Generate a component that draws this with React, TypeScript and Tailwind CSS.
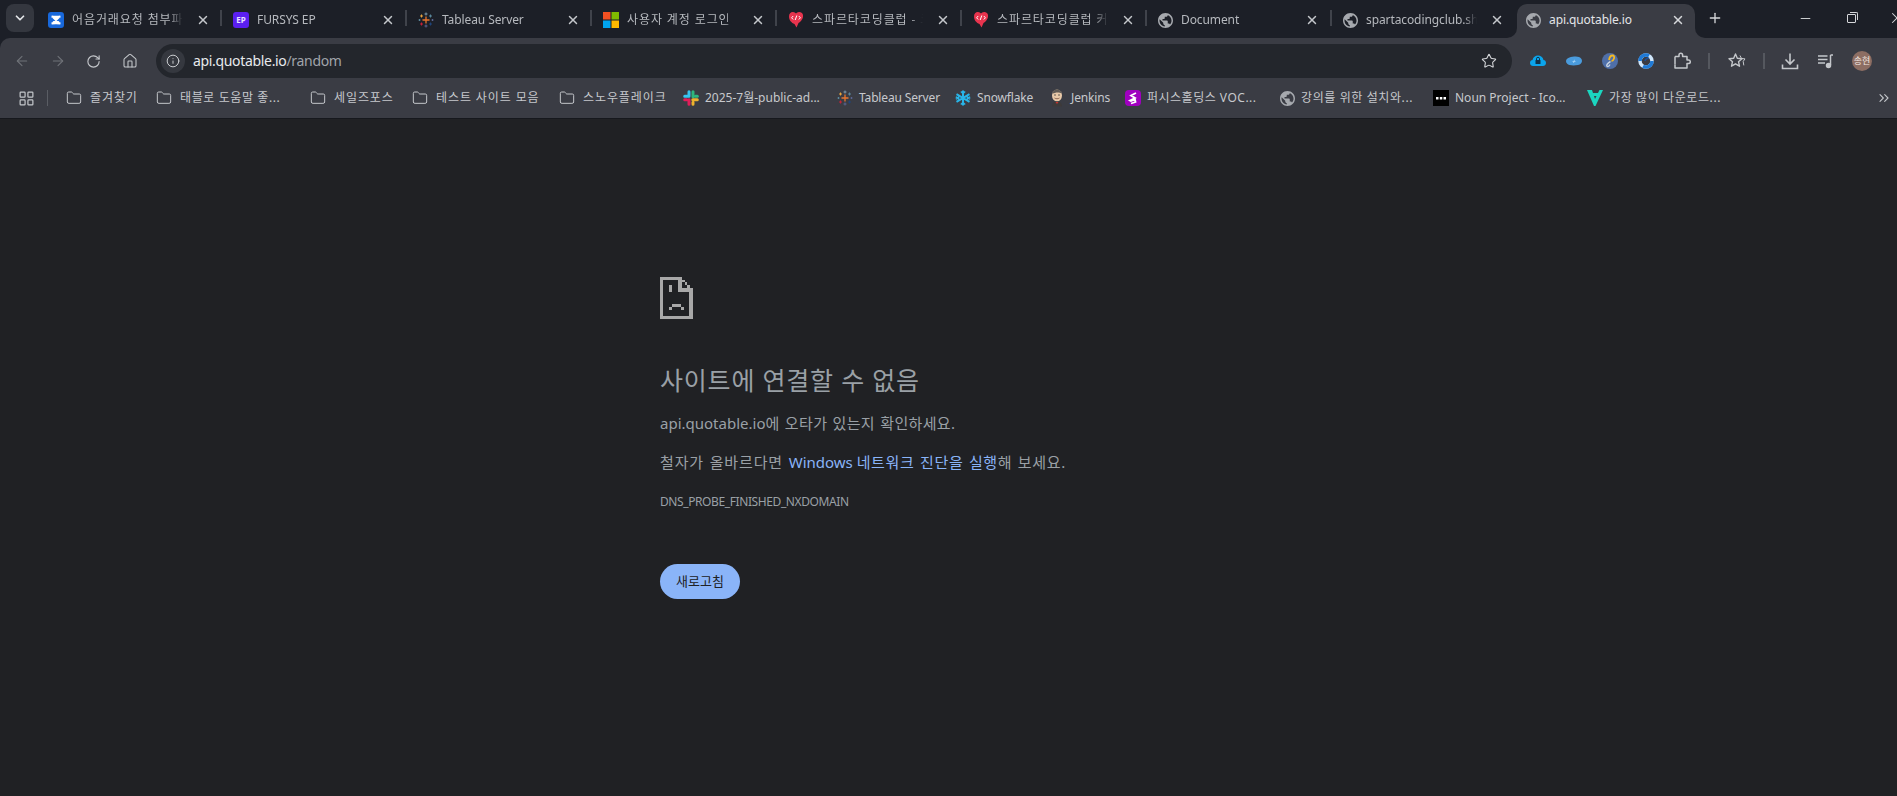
import {
  ArrowLeft,
  ArrowRight,
  ChevronDown,
  ChevronsRight,
  Folder,
  Home,
  Info,
  LayoutGrid,
  Minus,
  Plus,
  RotateCw,
  Star,
  X,
} from 'lucide-react';
import type { ReactNode } from 'react';

const Globe = ({ size = 15 }: { size?: number }) => (
  <svg width={size} height={size} viewBox="2 2 20 20" className="shrink-0">
    <path
      fill="#a6a9ae"
      d="M12 2C6.48 2 2 6.48 2 12s4.48 10 10 10 10-4.48 10-10S17.52 2 12 2zm-1 17.93c-3.95-.49-7-3.85-7-7.93 0-.62.08-1.21.21-1.79L9 15v1c0 1.1.9 2 2 2v1.93zm6.9-2.54c-.26-.81-1-1.39-1.9-1.39h-1v-3c0-.55-.45-1-1-1H8v-2h2c.55 0 1-.45 1-1V7h2c1.1 0 2-.9 2-2v-.41c2.93 1.19 5 4.06 5 7.41 0 2.08-.8 3.97-2.1 5.39z"
    />
  </svg>
);

const BlueX = () => (
  <svg width="16" height="16" viewBox="0 0 16 16" className="shrink-0">
    <rect width="16" height="16" rx="3" fill="#1868db" />
    <path d="M3.5 4.5c3 .6 6 .6 9 0M3.5 11.5c3-.6 6-.6 9 0M5 5l6 6M11 5l-6 6" stroke="#fff" strokeWidth="2.2" fill="none" />
  </svg>
);

const EpIcon = () => (
  <div className="flex h-4 w-4 shrink-0 items-center justify-center rounded-[3px] bg-[#5b1ff0] text-[8px] font-bold text-[#e8e0ff]">
    EP
  </div>
);

const TableauIcon = () => (
  <svg width="16" height="16" viewBox="0 0 16 16" className="shrink-0" fill="none" strokeWidth="1">
    <path d="M8 4.5v7M4.5 8h7" stroke="#e8762d" strokeWidth="1.3" />
    <path d="M8 .5v3M6.5 2h3" stroke="#7a99ac" />
    <path d="M8 12.5v3M6.5 14h3" stroke="#5b6591" />
    <path d="M3.5 2.5v3M2 4h3" stroke="#e8a33d" />
    <path d="M12.5 2.5v3M11 4h3" stroke="#59879b" />
    <path d="M3.5 10.5v3M2 12h3" stroke="#c72037" />
    <path d="M12.5 10.5v3M11 12h3" stroke="#1f447a" />
    <path d="M1.5 7v2M.5 8h2" stroke="#5b879b" />
    <path d="M14.5 7v2M13.5 8h2" stroke="#5b6591" />
  </svg>
);

const MsIcon = () => (
  <svg width="16" height="16" viewBox="0 0 16 16" className="shrink-0">
    <rect width="7.5" height="7.5" fill="#f25022" />
    <rect x="8.5" width="7.5" height="7.5" fill="#7fba00" />
    <rect y="8.5" width="7.5" height="7.5" fill="#00a4ef" />
    <rect x="8.5" y="8.5" width="7.5" height="7.5" fill="#ffb900" />
  </svg>
);

const SpartaIcon = () => (
  <svg width="16" height="18" viewBox="0 0 16 18" className="shrink-0">
    <path d="M1 5.500C1 2.500 3 .8 5 1c1.400.1 2.300.6 3 1.500C8.700 1.600 10 .8 11.500 1 14 1.200 15.500 3 15 6c-.4 2.600-2.500 4.800-4.500 6L8.500 16.500 6.500 13C3.500 12 1 9 1 5.500z" fill="#e8344e" />
    <path d="M5.200 5 3.600 6.800l1.600 1.700M10.800 5l1.600 1.800-1.600 1.700M8.800 4.500 7.200 9" stroke="#fff" strokeWidth="1" fill="none" />
  </svg>
);

const SlackIcon = () => (
  <svg width="16" height="16" viewBox="0 0 16 16" className="shrink-0" fill="none" strokeWidth="3" strokeLinecap="round">
    <path d="M6 1.700v4.600M1.700 6.200h3" stroke="#36c5f0" />
    <path d="M10 1.700v5" stroke="#2eb67d" />
    <path d="M14.300 6.200h-2" stroke="#2eb67d" />
    <path d="M10 14.300v-2M9.800 9.800h4.500" stroke="#ecb22e" />
    <path d="M6 14.300V9.800M1.700 9.800h2" stroke="#e01e5a" />
  </svg>
);

const SnowflakeIcon = () => (
  <svg width="16" height="16" viewBox="0 0 16 16" className="shrink-0" fill="none" stroke="#29b5e8" strokeWidth="2">
    <path d="M8 .5v15M1.500 4.200l13 7.600M14.500 4.200l-13 7.600" />
    <path d="M5.800 1.500 8 3.500l2.200-2M5.800 14.500 8 12.500l2.200 2M.8 7l2.800.9.600-2.900M15.200 7l-2.800.9-.6-2.900M.8 9l2.800-.9.600 2.900M15.200 9l-2.800-.9-.6 2.900" strokeWidth="1.400" />
  </svg>
);

const JenkinsIcon = () => (
  <svg width="16" height="18" viewBox="0 0 16 18" className="shrink-0">
    <ellipse cx="8" cy="6.500" rx="5" ry="6" fill="#e8c9a8" />
    <path d="M3.500 5C3.500 1.500 6 .5 8 .5s4.500 1 4.500 4C10.500 3 6 3 3.500 5z" fill="#5f5a55" />
    <path d="M3 17.500c0-3.500 2-5 5-5s5 1.500 5 5z" fill="#3d3a3a" />
    <path d="M6.500 13h3l-1.500 2z" fill="#c8342e" />
    <path d="M5.500 9c1.500 1 3.500 1 5 0" stroke="#7a5140" strokeWidth=".8" fill="none" />
    <circle cx="6" cy="6" r=".7" fill="#333" />
    <circle cx="10" cy="6" r=".7" fill="#333" />
  </svg>
);

const PurpleIcon = () => (
  <svg width="16" height="16" viewBox="0 0 16 16" className="shrink-0">
    <rect width="16" height="16" rx="4" fill="#a000c0" />
    <path d="M11 3 6 5.500l4 2.500-5 2.500 1 .5 4-1.500L10.500 12 6 13.500" stroke="#fff" strokeWidth="1.800" fill="none" />
  </svg>
);

const NounIcon = () => (
  <svg width="16" height="16" viewBox="0 0 16 16" className="shrink-0">
    <rect width="16" height="16" fill="#000" />
    <rect x="3" y="7" width="2.500" height="2.500" fill="#fff" />
    <rect x="6.800" y="7" width="2.500" height="2.500" fill="#fff" />
    <rect x="10.500" y="7" width="2.500" height="2.500" fill="#fff" />
  </svg>
);

const TealIcon = () => (
  <svg width="16" height="18" viewBox="0 0 16 18" className="shrink-0">
    <path d="M0 1h5l3 9 1.500-3H7L6 4h5l1.500-3H16L8.500 17H7z" fill="#1bd6c0" />
  </svg>
);

const CloudLock = () => (
  <svg width="16" height="16" viewBox="0 0 16 16">
    <path d="M0 10c0-2 1.200-3 2.500-3C3 4 5.500 2.500 8 2.500S13 4 13.500 7c1.300 0 2.500 1 2.500 3s-1.500 3-3 3H3c-1.500 0-3-1-3-3z" fill="#0ba5ec" />
    <rect x="5.500" y="7" width="5" height="4" rx=".6" fill="#10324a" />
    <path d="M6.500 7V5.800a1.500 1.500 0 0 1 3 0V7" stroke="#10324a" fill="none" />
  </svg>
);

const CloudBlob = () => (
  <svg width="16" height="16" viewBox="0 0 16 16">
    <path d="M0 8c0-2 2-3 3.500-3.500C6 3.500 11 3 13 4c2 .8 3 2.500 3 4s-1.500 3.500-4 4c-3 .6-6 .6-8.500 0C1.500 11.500 0 10 0 8z" fill="#4a9bdc" />
    <path d="M6.500 8.500h3M8.500 6.800 7.500 10" stroke="#a8d4f5" strokeWidth=".8" />
  </svg>
);

const LinkBall = () => (
  <svg width="16" height="16" viewBox="0 0 16 16" fill="none">
    <circle cx="8" cy="8" r="8" fill="#4f6fa8" />
    <path d="M7 7c.5-3 2-4.500 3.500-4.500s2 1.500 1.500 3C11.500 7 10.500 8 9.500 8" stroke="#f5b921" strokeWidth="1.800" />
    <path d="M8.500 8.500C7.500 9 6 10 5 11.500c-.6 1-.2 2 1 2 1 0 1.500-1 2-2" stroke="#c8d2e0" strokeWidth="1.400" />
  </svg>
);

const BlueRing = () => (
  <svg width="16" height="16" viewBox="0 0 16 16" fill="none">
    <circle cx="8" cy="8" r="6" stroke="#cfe6fb" strokeWidth="3.500" />
    <path d="M2 8a6 6 0 0 1 9-5.200M14 8a6 6 0 0 1-9 5.200" stroke="#1f7ad6" strokeWidth="3.500" />
    <path d="M7 8a3 3 0 0 1 4-2.500" stroke="#1a4f9a" strokeWidth="1.500" />
  </svg>
);

const PuzzleIcon = () => (
  <svg width="18" height="18" viewBox="0 0 18 18" fill="none" stroke="#c4c7cb" strokeWidth="1.500">
    <path d="M2 4.500h4V3a1.800 1.800 0 0 1 3.600 0v1.500H14V8h1.500a1.800 1.800 0 0 1 0 3.600H14v4.400H2v-3.400" strokeLinejoin="round" />
    <path d="M2 12.600V4.500" />
  </svg>
);

const DownloadIcon = () => (
  <svg width="18" height="18" viewBox="0 0 18 18" fill="none" stroke="#c4c7cb" strokeWidth="1.600">
    <path d="M9 1.500v10M4.500 7.500 9 12l4.500-4.500M1.500 12.500v4h15v-4" />
  </svg>
);

const QueueIcon = () => (
  <svg width="16" height="16" viewBox="0 0 16 16" fill="none" stroke="#c4c7cb" strokeWidth="1.500">
    <path d="M0 3h9.500M0 6.500h9.500M0 10h7" />
    <path d="M12.500 2v10" />
    <path d="M12.500 2H15" />
    <circle cx="10.500" cy="12.500" r="2" fill="#c4c7cb" />
  </svg>
);

const StarList = () => (
  <svg width="18" height="18" viewBox="0 0 18 18" fill="none" stroke="#c4c7cb" strokeWidth="1.400">
    <path d="M7.500 2 9.300 6.300l4.700.4-3.500 3 1 4.500-4-2.400-4 2.400 1-4.500L1 6.700l4.700-.4z" strokeLinejoin="round" />
    <path d="M12 3.500l1.500 3 3.500.4-1.800 2.500.6 4" strokeWidth="1" />
  </svg>
);

const ErrorIcon = () => (
  <svg width="33" height="42" viewBox="0 0 33 42" shapeRendering="crispEdges" fill="#a8a8a8">
    <rect width="22" height="3" />
    <rect width="3" height="42" />
    <rect y="39" width="33" height="3" />
    <rect x="29" y="11" width="4" height="31" />
    <rect x="18" width="4" height="15" />
    <rect x="18" y="11" width="15" height="4" />
    <rect x="22" y="3" width="3" height="2" />
    <rect x="25" y="5" width="2" height="3" />
    <rect x="27" y="8" width="3" height="3" />
    <rect x="9" y="8" width="3" height="7" />
    <rect x="12" y="27" width="9" height="3" />
    <rect x="9" y="30" width="3" height="3" />
    <rect x="21" y="30" width="3" height="3" />
  </svg>
);

type Tab = { title: string; icon: ReactNode; sep?: boolean; spacing: string };

const hangulTab = 'tracking-[0.9px]';
const latinTab = 'tracking-[-0.1px]';

const tabs: Tab[] = [
  { title: '어음거래요청 첨부파일', icon: <BlueX />, sep: true, spacing: hangulTab },
  { title: 'FURSYS EP', icon: <EpIcon />, sep: true, spacing: latinTab },
  { title: 'Tableau Server', icon: <TableauIcon />, sep: true, spacing: latinTab },
  { title: '사용자 계정 로그인', icon: <MsIcon />, sep: true, spacing: hangulTab },
  { title: '스파르타코딩클럽 - 코딩', icon: <SpartaIcon />, sep: true, spacing: hangulTab },
  { title: '스파르타코딩클럽 커뮤니티', icon: <SpartaIcon />, sep: true, spacing: hangulTab },
  { title: 'Document', icon: <Globe />, sep: true, spacing: latinTab },
  { title: 'spartacodingclub.shop', icon: <Globe />, spacing: latinTab },
];

type Mark = { label: string; icon: ReactNode; width: string; spacing: string };

const folder = <Folder size={16} strokeWidth={1.5} color="#c4c7cb" className="shrink-0" />;
const hangulMark = 'gap-[8px] tracking-[0.9px]';
const cutMark = 'gap-[8px] tracking-[0.6px]';
const cutFavicon = 'gap-[6px] tracking-[0.6px]';
const latinMark = 'gap-[6px] tracking-[-0.15px]';

const bookmarks: Mark[] = [
  { label: '즐겨찾기', icon: folder, width: 'w-[90px]', spacing: hangulMark },
  { label: '태블로 도움말 좋...', icon: folder, width: 'w-[154px]', spacing: cutMark },
  { label: '세일즈포스', icon: folder, width: 'w-[102px]', spacing: hangulMark },
  { label: '테스트 사이트 모음', icon: folder, width: 'w-[147px]', spacing: hangulMark },
  { label: '스노우플레이크', icon: folder, width: 'w-[124px]', spacing: hangulMark },
  { label: '2025-7월-public-ad...', icon: <SlackIcon />, width: 'w-[154px]', spacing: 'gap-[6px]' },
  { label: 'Tableau Server', icon: <TableauIcon />, width: 'w-[118px]', spacing: latinMark },
  { label: 'Snowflake', icon: <SnowflakeIcon />, width: 'w-[94px]', spacing: latinMark },
  { label: 'Jenkins', icon: <JenkinsIcon />, width: 'w-[76px]', spacing: latinMark },
  { label: '퍼시스홀딩스 VOC...', icon: <PurpleIcon />, width: 'w-[155px]', spacing: 'gap-[6px] tracking-[0.5px]' },
  { label: '강의를 위한 설치와...', icon: <Globe />, width: 'w-[153px]', spacing: cutFavicon },
  { label: 'Noun Project - Ico...', icon: <NounIcon />, width: 'w-[154px]', spacing: 'gap-[6px]' },
  { label: '가장 많이 다운로드...', icon: <TealIcon />, width: 'w-[150px]', spacing: cutFavicon },
];

const TabItem = ({ tab }: { tab: Tab }) => (
  <div className="relative flex h-[34px] w-[185px] shrink-0 items-center pb-[2px] pl-[11px]">
    {tab.icon}
    <span
      className={`ml-2 w-[111px] overflow-hidden whitespace-nowrap text-[12px] leading-4 text-[#b6b9be] [mask-image:linear-gradient(to_right,black_88%,transparent)] ${tab.spacing}`}
    >
      {tab.title}
    </span>
    <X size={14} strokeWidth={2.5} color="#c4c7cb" className="ml-[13px] shrink-0" />
    {tab.sep && <div className="absolute right-0 top-[6px] h-4 w-[2px] bg-[#40434b]" />}
  </div>
);

const ActiveTab = () => (
  <div className="relative flex h-[34px] w-[178px] shrink-0 items-center rounded-t-[10px] bg-[#3a3c44] pb-[2px] pl-[9px]">
    <Globe />
    <span className="ml-2 w-[112px] whitespace-nowrap text-[12px] leading-4 tracking-[-0.1px] text-[#e3e5e8]">api.quotable.io</span>
    <X size={14} strokeWidth={2.5} color="#d5d7da" className="ml-[10px] shrink-0" />
    <div className="absolute -left-[10px] bottom-0 h-[10px] w-[10px] bg-[#3a3c44]">
      <div className="h-full w-full rounded-br-[10px] bg-[#1c1f27]" />
    </div>
    <div className="absolute -right-[10px] bottom-0 h-[10px] w-[10px] bg-[#3a3c44]">
      <div className="h-full w-full rounded-bl-[10px] bg-[#1c1f27]" />
    </div>
  </div>
);

const ToolSlot = ({ children }: { children: ReactNode }) => (
  <div className="flex h-8 w-9 shrink-0 items-center justify-center">{children}</div>
);

export default function App() {
  return (
    <div className="flex h-[796px] w-[1897px] flex-col overflow-hidden bg-[#1c1f27] font-['Noto_Sans','Noto_Sans_CJK_KR',sans-serif]">
      {/* tab strip */}
      <div className="flex h-[38px] shrink-0 items-end pl-[6px]">
        <div className="mb-[6px] flex h-7 w-7 shrink-0 items-center justify-center rounded-lg bg-[#34373f]">
          <ChevronDown size={14} strokeWidth={3} color="#e3e5e8" />
        </div>
        <div className="ml-[3px] flex">
          {tabs.map((t) => (
            <TabItem key={t.title} tab={t} />
          ))}
          <ActiveTab />
        </div>
        <div className="mb-[8px] ml-2 flex h-6 w-6 shrink-0 items-center justify-center">
          <Plus size={16} strokeWidth={2} color="#d5d7da" />
        </div>
        <div className="mb-[8px] ml-[55px] flex shrink-0 text-[#d5d7da]">
          <div className="flex h-6 w-[46px] items-center justify-center">
            <Minus size={15} strokeWidth={1.5} />
          </div>
          <div className="flex h-6 w-[46px] items-center justify-center">
            <div className="relative h-[9px] w-[9px] rounded-[1px] border border-[#d5d7da]">
              <div className="absolute -right-[3px] -top-[3px] h-[8px] w-[8px] rounded-tr-[2px] border-r border-t border-[#d5d7da]" />
            </div>
          </div>
          <div className="flex h-6 w-[46px] items-center justify-center">
            <X size={18} strokeWidth={1.4} />
          </div>
        </div>
      </div>

      {/* toolbar + bookmarks */}
      <div className="shrink-0 rounded-tl-[10px] border-b border-[#16181d] bg-[#3a3c44]">
        <div className="flex h-[40px] items-end">
          <div className="flex h-[34px] w-[156px] shrink-0 items-center pl-1">
            <ToolSlot>
              <ArrowLeft size={16} strokeWidth={1.6} color="#6f7278" />
            </ToolSlot>
            <ToolSlot>
              <ArrowRight size={16} strokeWidth={1.6} color="#6f7278" />
            </ToolSlot>
            <ToolSlot>
              <RotateCw size={15} strokeWidth={1.8} color="#c4c7cb" className="-ml-[2px]" />
            </ToolSlot>
            <ToolSlot>
              <Home size={16} strokeWidth={1.6} color="#c4c7cb" />
            </ToolSlot>
          </div>
          <div className="flex h-[34px] w-[1356px] shrink-0 items-center rounded-full bg-[#23262c] pl-[5px] pr-[15px]">
            <div className="flex h-[24px] w-[24px] shrink-0 items-center justify-center rounded-full bg-[#35383f]">
              <Info size={14} strokeWidth={1.6} color="#d5d7da" />
            </div>
            <span className="ml-2 text-[14px] leading-5 tracking-[-0.33px] text-[#e8eaed]">
              api.quotable.io<span className="text-[#a0a4aa]">/random</span>
            </span>
            <Star size={16} strokeWidth={1.6} color="#d5d7da" className="ml-auto" />
          </div>
          <div className="flex h-[34px] shrink-0 items-center pl-[8px]">
            <ToolSlot><CloudLock /></ToolSlot>
            <ToolSlot><CloudBlob /></ToolSlot>
            <ToolSlot><LinkBall /></ToolSlot>
            <ToolSlot><BlueRing /></ToolSlot>
            <ToolSlot><PuzzleIcon /></ToolSlot>
            <div className="ml-[8px] h-4 w-[2px] bg-[#55585f]" />
            <div className="ml-[9px]"><ToolSlot><StarList /></ToolSlot></div>
            <div className="ml-[8px] h-4 w-[2px] bg-[#55585f]" />
            <div className="ml-[7px]"><ToolSlot><DownloadIcon /></ToolSlot></div>
            <ToolSlot><QueueIcon /></ToolSlot>
            <ToolSlot>
              <div className="flex h-5 w-5 items-center justify-center rounded-full bg-[#8d6e63] text-[9px] text-[#f2e6e0]">
                송현
              </div>
            </ToolSlot>
            <ToolSlot>
              <div className="flex flex-col gap-[3px]">
                <div className="h-[3px] w-[3px] rounded-full bg-[#c4c7cb]" />
                <div className="h-[3px] w-[3px] rounded-full bg-[#c4c7cb]" />
                <div className="h-[3px] w-[3px] rounded-full bg-[#c4c7cb]" />
              </div>
            </ToolSlot>
          </div>
        </div>
        <div className="flex h-[40px] items-center pl-[18px]">
          <LayoutGrid size={17} strokeWidth={1.7} color="#c4c7cb" className="shrink-0" />
          <div className="ml-[12px] mr-[18px] h-4 w-px shrink-0 bg-[#5a5d64]" />
          {bookmarks.map((b) => (
            <div key={b.label} className={`flex shrink-0 items-center ${b.width} ${b.spacing}`}>
              {b.icon}
              <span className="whitespace-nowrap text-[12px] leading-4 text-[#c7c9cd]">{b.label}</span>
            </div>
          ))}
          <ChevronsRight size={16} strokeWidth={1.6} color="#c4c7cb" className="ml-auto mr-[5px] shrink-0" />
        </div>
      </div>

      {/* error page */}
      <main className="flex-1 bg-[#202124] pl-[660px] pt-[158px]">
        <ErrorIcon />
        <h1 className="mt-[46px] text-[25px] font-normal leading-[30px] tracking-[0.8px] text-[#9aa0a6]">사이트에 연결할 수 없음</h1>
        <p className="mt-4 text-[15px] leading-6 text-[#9aa0a6]">
          api.quotable.io<span className="tracking-[0.35px] [word-spacing:1px]">에 오타가 있는지 확인하세요.</span>
        </p>
        <p className="mt-[15px] text-[15px] leading-6 text-[#9aa0a6]">
          <span className="tracking-[0.85px] [word-spacing:1px]">철자가 올바르다면 </span>
          <span className="text-[#8ab4f8]">
            Windows <span className="tracking-[0.65px] [word-spacing:1px]">네트워크 진단을 실행</span>
          </span>
          <span className="tracking-[0.65px] [word-spacing:1px]">해 보세요.</span>
        </p>
        <div className="mt-5 text-[12px] leading-4 tracking-[-0.4px] text-[#9aa0a6]">DNS_PROBE_FINISHED_NXDOMAIN</div>
        <button className="mt-[54px] h-[35px] w-20 rounded-[20px] bg-[#8ab4f8] text-[13px] text-[#202124]">새로고침</button>
      </main>
    </div>
  );
}
